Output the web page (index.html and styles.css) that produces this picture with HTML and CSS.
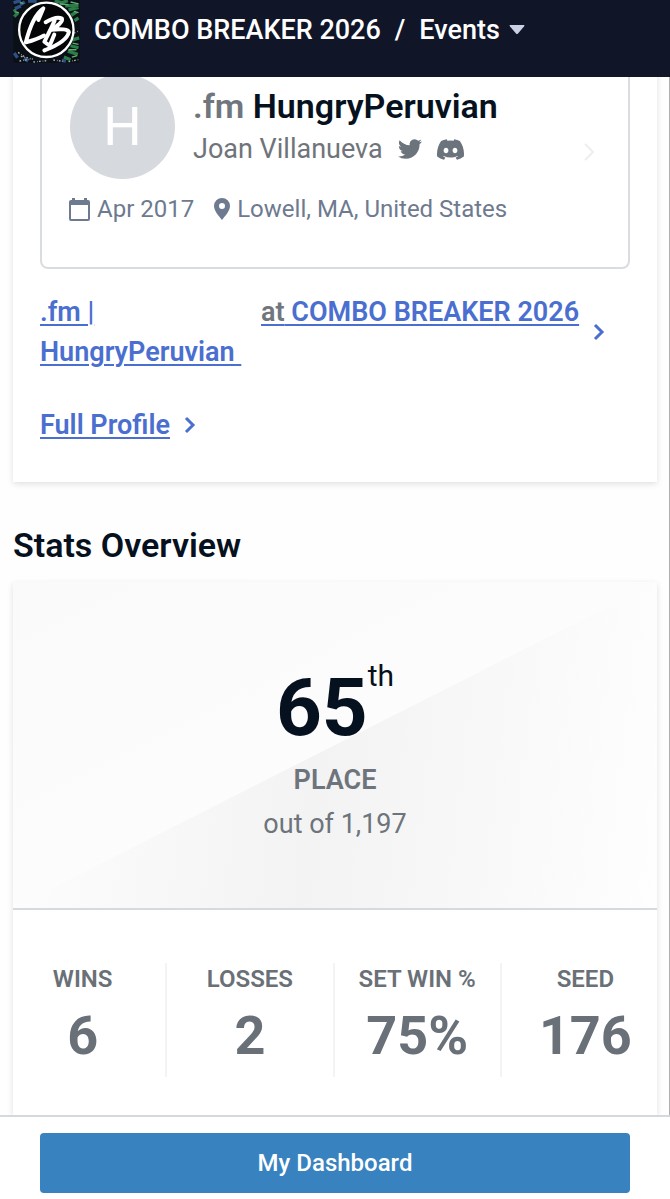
FILE: index.html
```html
<!DOCTYPE html>
<html lang="en">
<head>
<meta charset="utf-8">
<meta name="viewport" content="width=device-width, initial-scale=1">
<title>HungryPeruvian | COMBO BREAKER 2026</title>
<link rel="stylesheet" href="styles.css">
</head>
<body>
<div class="app">
  <header class="topbar">
    <svg class="logo" viewBox="39 0 201 190" role="img" aria-label="Combo Breaker">
      <rect x="39" y="-12" width="201" height="202" rx="8" fill="#0b1016"/>
      <g fill="none" stroke-width="10">
        <path stroke="#2c4f86" d="M40 8l22-6M44 26l18-8M84 3l26 0M42 160l10 14M72 176l12 8M60 14l14-8M186 182l12 2"/>
        <path stroke="#2b7d47" d="M164 3l22 5l18-6M196 18l40-2M206 30l30-8M214 46l16-10M224 62l12-8M42 50l12-12M218 120l20-6M212 138l24 6M204 154l30 10M192 172l20 8M40 34l8-4"/>
        <path stroke="#5fae74" stroke-width="4" d="M180 12l26 2M212 6l24 6M222 34l14 4M44 36l12 2M218 130l18 4M206 150l24 0M216 172l16-4M60 8l10 2"/>
        <path stroke="#a9afb4" stroke-width="4" stroke-dasharray="5 6 2 4" d="M54 158l20 14M58 184l34-6M62 170l36 8M100 187l40-4M160 181l30 4M222 100l14-6M206 186l30-6"/>
      </g>
      <circle cx="139" cy="90" r="82" fill="#050607" stroke="#fff" stroke-width="7"/>
      <g fill="none" stroke="#fff" stroke-width="12" stroke-linecap="round" stroke-linejoin="round">
        <path d="M115 60L130 25C106 42 88 84 77 128C98 122 118 115 132 107"/>
        <path d="M137 67C154 57 174 50 186 56C190 66 172 78 154 90C180 86 207 88 207 97C202 119 168 139 133 152"/>
        <path d="M164 62L150 92L133 126L149 138L163 104"/>
      </g>
    </svg>
    <nav class="crumbs">
      <a href="#">COMBO BREAKER 2026</a>
      <span>/</span>
      <button type="button" class="events">Events
        <svg width="16" height="10" viewBox="0 0 16 10"><path d="M1 0H15Q16 0 15 1.500L9 8.500Q8 9.500 7 8.500L1 1.500Q0 0 1 0Z" fill="#ccd0e4"/></svg>
      </button>
    </nav>
  </header>

  <main class="content">
    <section class="card profile">
      <div class="player">
        <div class="identity">
          <div class="avatar">H</div>
          <div class="who">
            <h1 class="tag"><span>.fm</span> HungryPeruvian</h1>
            <div class="realname">Joan Villanueva
              <svg class="twitter" viewBox="0 2 24 20" role="img" aria-label="Twitter"><path fill="currentColor" d="M23.953 4.57a10 10 0 01-2.825.775 4.958 4.958 0 002.163-2.723c-.951.555-2.005.959-3.127 1.184a4.92 4.92 0 00-8.384 4.482C7.690 8.095 4.067 6.130 1.640 3.162a4.822 4.822 0 00-.666 2.475c0 1.710.870 3.213 2.188 4.096a4.904 4.904 0 01-2.228-.616v.060a4.923 4.923 0 003.946 4.827 4.996 4.996 0 01-2.212.085 4.936 4.936 0 004.604 3.417 9.867 9.867 0 01-6.102 2.105c-.390 0-.779-.023-1.170-.067a13.995 13.995 0 007.557 2.209c9.053 0 13.998-7.496 13.998-13.985 0-.210 0-.420-.015-.630A9.935 9.935 0 0024 4.590z"/></svg>
              <svg class="discord" viewBox="0 2 24 20" role="img" aria-label="Discord"><path fill="currentColor" d="M20.317 4.370a19.791 19.791 0 0 0-4.885-1.515.074.074 0 0 0-.079.037c-.210.375-.444.864-.608 1.250a18.270 18.270 0 0 0-5.487 0 12.640 12.640 0 0 0-.617-1.250.077.077 0 0 0-.079-.037A19.736 19.736 0 0 0 3.677 4.370a.070.070 0 0 0-.032.027C.533 9.046-.320 13.580.099 18.057a.082.082 0 0 0 .031.057 19.900 19.900 0 0 0 5.993 3.030.078.078 0 0 0 .084-.028 14.090 14.090 0 0 0 1.226-1.994.076.076 0 0 0-.041-.106 13.107 13.107 0 0 1-1.872-.892.077.077 0 0 1-.008-.128 10.200 10.200 0 0 0 .372-.292.074.074 0 0 1 .077-.010c3.928 1.793 8.180 1.793 12.062 0a.074.074 0 0 1 .078.010c.120.098.246.198.373.292a.077.077 0 0 1-.006.127 12.299 12.299 0 0 1-1.873.892.077.077 0 0 0-.041.107c.360.698.772 1.362 1.225 1.993a.076.076 0 0 0 .084.028 19.839 19.839 0 0 0 6.002-3.030.077.077 0 0 0 .032-.054c.500-5.177-.838-9.674-3.549-13.660a.061.061 0 0 0-.031-.030zM8.020 15.330c-1.183 0-2.157-1.085-2.157-2.419 0-1.333.956-2.419 2.157-2.419 1.210 0 2.176 1.096 2.157 2.420 0 1.333-.956 2.418-2.157 2.418zm7.975 0c-1.183 0-2.157-1.085-2.157-2.419 0-1.333.955-2.419 2.157-2.419 1.210 0 2.176 1.096 2.157 2.420 0 1.333-.946 2.418-2.157 2.418z"/></svg>
            </div>
          </div>
          <svg class="chevron faint" viewBox="0 0 12 18"><path d="M2 1l8 8-8 8"/></svg>
        </div>
        <div class="meta">
          <span class="fact">
            <svg width="21" height="23" viewBox="0 0 21 23"><path fill="currentColor" fill-rule="evenodd" d="M3 0h3v2h9V0h3v2h1q2 0 2 2v17q0 2-2 2H2q-2 0-2-2V4q0-2 2-2h1ZM2 7v14h17V7Z"/></svg>
            Apr 2017
          </span>
          <span class="fact">
            <svg width="16" height="22" viewBox="0 0 16 22"><path fill="currentColor" fill-rule="evenodd" d="M8 0a8 8 0 0 0-8 8c0 5 5 10 8 14c3-4 8-9 8-14a8 8 0 0 0-8-8ZM8 5a3 3 0 1 1 0 6a3 3 0 0 1 0-6Z"/></svg>
            Lowell, MA, United States
          </span>
        </div>
      </div>

      <div class="links">
        <a class="event-link" href="#">
          <span class="who-link">.fm | HungryPeruvian&nbsp;</span>
          <span class="at-link"><span class="at">at</span> COMBO BREAKER 2026</span>
          <svg class="chevron" viewBox="0 0 12 18"><path d="M2 2l7 7-7 7"/></svg>
        </a>
        <a class="full-link" href="#">
          <span>Full Profile</span>
          <svg class="chevron" viewBox="0 0 12 18"><path d="M2 2l7 7-7 7"/></svg>
        </a>
      </div>
    </section>

    <h2 class="heading">Stats Overview</h2>

    <section class="card stats">
      <div class="placing">
        <div class="rank">65<sup>th</sup></div>
        <div class="label">PLACE</div>
        <div class="total">out of 1,197</div>
      </div>
      <dl class="figures">
        <div><dt>WINS</dt><dd>6</dd></div>
        <div><dt>LOSSES</dt><dd>2</dd></div>
        <div><dt>SET WIN %</dt><dd>75%</dd></div>
        <div><dt>SEED</dt><dd>176</dd></div>
      </dl>
    </section>
  </main>

  <footer class="dock">
    <button type="button" class="dashboard">My Dashboard</button>
  </footer>
</div>
</body>
</html>
```
FILE: styles.css
```css
* { box-sizing: border-box; }
body {
  margin: 0;
  background: #fefefe;
  color: #061120;
  font-family: Roboto, "Liberation Sans", sans-serif;
}
h1, h2, dl, dd { margin: 0; }
svg { flex: none; display: block; }
button { border: 0; font: inherit; cursor: pointer; }

.app {
  display: flex;
  flex-direction: column;
  min-height: 100vh;
  border-right: 1px solid #b0b0b0;
}

.topbar {
  position: sticky;
  top: 0;
  z-index: 2;
  display: flex;
  gap: 14px;
  height: 77px;
  margin-right: -1px;
  padding-left: 13px;
  background: #101528;
}
.logo { width: 67px; height: 63px; }
.crumbs {
  display: flex;
  align-items: center;
  gap: 14px;
  height: 60px;
  color: #fff;
  font-size: 27px;
  font-weight: 500;
  white-space: nowrap;
}
.crumbs a { color: inherit; text-decoration: none; }
.events {
  display: flex;
  align-items: center;
  gap: 9px;
  padding: 0;
  background: none;
  color: inherit;
}

.content {
  display: flex;
  flex: 1;
  flex-direction: column;
  margin-top: -30px;
  padding: 0 12px 0 13px;
}
.card { background: #fff; box-shadow: 0 2px 6px rgba(0, 0, 0, .12); }
.profile { padding: 0 27px 37px; }

.player {
  padding: 27px 28px 42px 27px;
  border: 2px solid #d9dce1;
  border-top: 0;
  border-radius: 0 0 8px 8px;
}
.identity { display: flex; gap: 18px; padding-left: 1px; }
.avatar {
  display: grid;
  place-items: center;
  flex: none;
  width: 105px;
  height: 105px;
  border-radius: 50%;
  background: #d6d9de;
  color: #fff;
  font-size: 54px;
}
.who { flex: 1; padding-top: 12px; white-space: nowrap; }
.tag { font-size: 34px; font-weight: 600; line-height: 40px; }
.tag span { color: #70767e; }
.realname {
  display: flex;
  align-items: center;
  color: #6f747a;
  font-size: 27px;
  line-height: 46px;
}
.twitter { width: 24px; height: 20px; margin-left: 15px; color: #6b737c; }
.discord { width: 27px; height: 23px; margin-left: 15px; color: #6b737c; }
.chevron {
  width: 12px;
  height: 18px;
  fill: none;
  stroke: #4a6fd0;
  stroke-width: 3;
}
.faint { align-self: flex-end; margin: 0 5px 18px 0; stroke: #eceef0; stroke-width: 2; }

.meta {
  display: flex;
  gap: 20px;
  padding-top: 14px;
  color: #6e7a8f;
  font-size: 24px;
  line-height: 32px;
  white-space: nowrap;
}
.fact { display: flex; align-items: center; gap: 7px; }

.links {
  display: flex;
  flex-direction: column;
  gap: 33px;
  padding-top: 23px;
  font-size: 27px;
  font-weight: 600;
  line-height: 40px;
}
.links a { display: flex; align-items: center; color: #4a6fd0; text-decoration: none; }
.links span { text-decoration: underline; text-decoration-thickness: 2px; text-underline-offset: 3px; }
.who-link { width: 203px; }
.at-link { align-self: flex-start; margin: 0 14px 0 18px; white-space: nowrap; }
.links .at { color: #70767e; text-decoration: none; }
.full-link { gap: 14px; }

.heading { padding: 43px 0 17px; font-size: 34px; font-weight: 600; line-height: 40px; }

.stats { flex: 1; }
.placing {
  position: relative;
  isolation: isolate;
  display: flex;
  flex-direction: column;
  align-items: center;
  padding: 80px 0 62px;
  border-bottom: 2px solid #d5d9e0;
  background: linear-gradient(153deg, #fafafa, #fcfcfc 45%, #fff);
}
.placing::before {
  content: "";
  position: absolute;
  inset: 0;
  z-index: -1;
  background: linear-gradient(97deg, #fefefe, #f3f3f3 48%, #fefefe);
  clip-path: polygon(0 100%, 100% 0, 100% 100%);
}
.rank { display: flex; font-size: 80px; font-weight: 700; line-height: 92px; }
.rank sup { font-size: 30px; font-weight: 400; line-height: 28px; }
.label { padding-top: 4px; color: #6d747b; font-size: 27px; font-weight: 600; line-height: 44px; }
.total { color: #6d747b; font-size: 27px; line-height: 44px; }

.figures {
  display: grid;
  grid-template-columns: repeat(4, 1fr);
  margin: 0 -12px 0 -13px;
  padding: 53px 0 36px;
  color: #697077;
  text-align: center;
}
.figures div { border-right: 2px solid #f2f3f4; }
.figures div:last-child { border: 0; }
.figures dt { font-size: 24px; font-weight: 600; line-height: 32px; white-space: nowrap; }
.figures dd { font-size: 54px; font-weight: 700; line-height: 82px; }

.dock {
  position: sticky;
  bottom: 0;
  z-index: 2;
  margin-right: -1px;
  padding: 16px 40px 6px;
  border-top: 2px solid #d5d8dd;
  background: #fff;
}
.dashboard {
  display: block;
  width: 100%;
  height: 60px;
  border-radius: 4px;
  background: #3882bf;
  color: #fff;
  font-size: 24px;
  font-weight: 500;
}
```
